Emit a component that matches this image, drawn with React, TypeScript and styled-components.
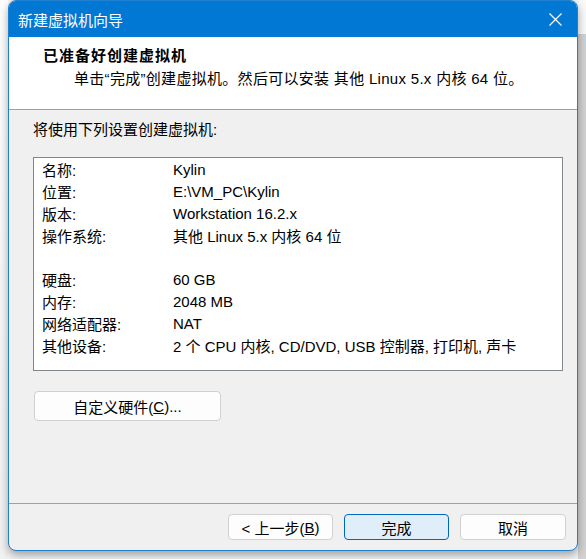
import * as React from 'react';
import styled, { createGlobalStyle } from 'styled-components';

const GlobalStyle = createGlobalStyle`
    html, body {
        margin: 0;
        padding: 0;
        background: #f4f4f4;
    }
    body {
        font-family: "Liberation Sans", "Noto Sans CJK SC", sans-serif;
        font-size: 15px;
        color: #000;
    }
`

const Root = styled.div`
    display: flex;
    width: 586px;
    height: 559px;
    overflow: hidden;
    background: #f4f4f4;
`

const Gutter = styled.div`
    flex: 0 0 8px;
    background: linear-gradient(#ffffff, #f2f2f2);
`

const Window = styled.div`
    flex: 0 0 570px;
    height: 551px;
    box-sizing: border-box;
    display: flex;
    flex-direction: column;
    border: 1px solid #1f7fd0;
    border-radius: 8px;
    overflow: hidden;
    background: #f0f0f0;
    box-shadow: 0 4px 10px rgba(0, 0, 0, 0.35);
    position: relative;
    z-index: 1;
`

const Behind = styled.div`
    flex: 1;
    background: linear-gradient(#fafafa 0 34px, #d2d2d2 34px);
`

const TitleBar = styled.div`
    flex: 0 0 36px;
    display: flex;
    align-items: center;
    justify-content: space-between;
    padding: 0 15px 0 9px;
    background: #0078d4;
    color: #fff;
    font-size: 15px;
`

const CloseIcon = styled.svg`
    width: 13px;
    height: 13px;
`

const Header = styled.div`
    flex: 0 0 73px;
    box-sizing: border-box;
    background: #fff;
    border-bottom: 1px solid #a0a0a0;
    padding-top: 9px;
`

const HeaderTitle = styled.div`
    padding-left: 34px;
    font-weight: bold;
    font-size: 15px;
    line-height: 20px;
    letter-spacing: 1px;
`

const HeaderSub = styled.div`
    padding-left: 65px;
    margin-top: 3px;
    line-height: 20px;
    letter-spacing: 0.3px;
`

const Body = styled.div`
    flex: 1;
    display: flex;
    flex-direction: column;
    align-items: flex-start;
    padding: 10px 0 0 24px;
`

const Intro = styled.div`
    line-height: 20px;
`

const ListBox = styled.div`
    margin-top: 17px;
    width: 530px;
    height: 214px;
    box-sizing: border-box;
    border: 1px solid #82878c;
    background: #fff;
    padding: 0 0 0 8px;
`

const Row = styled.div`
    display: flex;
    height: 22px;
    align-items: center;
`

const Label = styled.div`
    flex: 0 0 131px;
`

const Value = styled.div`
    white-space: pre;
`

const Button = styled.button<{ $primary?: boolean; $w: number; $h?: number }>`
    width: ${p => p.$w}px;
    height: ${p => p.$h ?? 26}px;
    box-sizing: border-box;
    font-family: inherit;
    font-size: 15px;
    color: #000;
    background: ${p => (p.$primary ? '#e0eef9' : '#fdfdfd')};
    border: 1px solid ${p => (p.$primary ? '#0067c0' : '#d0d0d0')};
    border-radius: 4px;
    padding: 0;
    display: flex;
    align-items: center;
    justify-content: center;
`

const HardwareButton = styled(Button)`
    margin: 20px 0 0 1px;
`

const Footer = styled.div`
    flex: 0 0 47px;
    box-sizing: border-box;
    border-top: 1px solid #a0a0a0;
    display: flex;
    justify-content: flex-end;
    gap: 11px;
    padding: 10px 11px 0 0;
`

type Setting = { label: string; value: string }

const settings: Array<Setting | null> = [
    { label: '名称:', value: 'Kylin' },
    { label: '位置:', value: 'E:\\VM_PC\\Kylin' },
    { label: '版本:', value: 'Workstation 16.2.x' },
    { label: '操作系统:', value: '其他 Linux 5.x 内核 64 位' },
    null,
    { label: '硬盘:', value: '60 GB' },
    { label: '内存:', value: '2048 MB' },
    { label: '网络适配器:', value: 'NAT' },
    { label: '其他设备:', value: '2 个 CPU 内核, CD/DVD, USB 控制器, 打印机, 声卡' },
]

export default function App() {
    return (
        <Root>
            <GlobalStyle />
            <Gutter />
            <Window>
                <TitleBar>
                    <span>新建虚拟机向导</span>
                    <CloseIcon viewBox="0 0 13 13">
                        <path d="M0.5 0.5 L12.5 12.5 M12.5 0.5 L0.5 12.5" stroke="#fff" strokeWidth="1.2" fill="none" />
                    </CloseIcon>
                </TitleBar>
                <Header>
                    <HeaderTitle>已准备好创建虚拟机</HeaderTitle>
                    <HeaderSub>单击“完成”创建虚拟机。然后可以安装 其他 Linux 5.x 内核 64 位。</HeaderSub>
                </Header>
                <Body>
                    <Intro>将使用下列设置创建虚拟机:</Intro>
                    <ListBox>
                        {settings.map((s, i) =>
                            s ? (
                                <Row key={i}>
                                    <Label>{s.label}</Label>
                                    <Value>{s.value}</Value>
                                </Row>
                            ) : (
                                <Row key={i} />
                            )
                        )}
                    </ListBox>
                    <HardwareButton $w={187} $h={30}>
                        自定义硬件(<u>C</u>)...
                    </HardwareButton>
                </Body>
                <Footer>
                    <Button $w={105}>&lt; 上一步(<u>B</u>)</Button>
                    <Button $w={105} $primary>完成</Button>
                    <Button $w={106}>取消</Button>
                </Footer>
            </Window>
            <Behind />
        </Root>
    );
}
